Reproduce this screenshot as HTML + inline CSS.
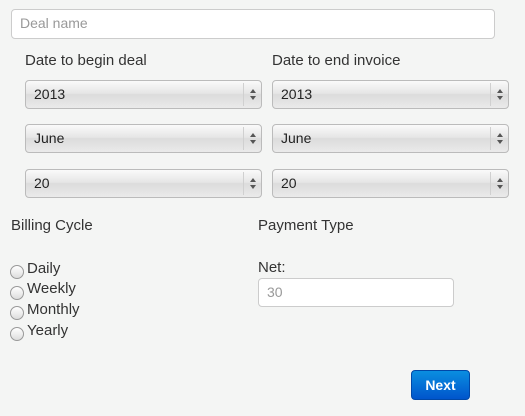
<!DOCTYPE html><html><head><style>
body{margin:0;width:525px;height:416px;background:#f4f5f4;font-family:"Liberation Sans",sans-serif;color:#333;position:relative;overflow:hidden}
.a{position:absolute}
.inp{position:absolute;background:#fff;border:1px solid #ccc;border-radius:4px;box-sizing:border-box;font-size:14px;color:#999;padding-left:8px;line-height:27px}
.sel{position:absolute;width:237px;height:29px;box-sizing:border-box;border:1px solid #bbb;border-radius:4px;background:linear-gradient(#fafafa,#e6e6e6 45%,#dcdcdc 50%,#eaeaea);font-size:14px;color:#222;padding-left:8px;line-height:27px}
.sel:after{content:"";position:absolute;right:17px;top:2px;bottom:2px;border-left:1px solid #d0d0d0}
.sel i{position:absolute;right:5px;top:8px;width:0;height:0;border-left:3px solid transparent;border-right:3px solid transparent;border-bottom:4px solid #555}
.sel b{position:absolute;right:5px;top:15px;width:0;height:0;border-left:3px solid transparent;border-right:3px solid transparent;border-top:4px solid #555}
.lbl{position:absolute;font-size:15px;color:#333}
.r{position:absolute;left:10px;width:12px;height:12px;border:1px solid #999;border-radius:50%;background:linear-gradient(#fff,#ddd)}
</style></head><body>
<div class="inp" style="left:11px;top:9px;width:484px;height:30px">Deal name</div>
<div class="lbl" style="left:25px;top:52px">Date to begin deal</div>
<div class="lbl" style="left:272px;top:52px">Date to end invoice</div>
<div class="sel" style="left:25px;top:80px">2013<i></i><b></b></div>
<div class="sel" style="left:25px;top:124px">June<i></i><b></b></div>
<div class="sel" style="left:25px;top:169px">20<i></i><b></b></div>
<div class="sel" style="left:272px;top:80px">2013<i></i><b></b></div>
<div class="sel" style="left:272px;top:124px">June<i></i><b></b></div>
<div class="sel" style="left:272px;top:169px">20<i></i><b></b></div>
<div class="lbl" style="left:11px;top:217px">Billing Cycle</div>
<div class="lbl" style="left:258px;top:217px">Payment Type</div>
<div class="r" style="top:265px"></div><div class="lbl" style="left:27px;top:260px">Daily</div>
<div class="r" style="top:286px"></div><div class="lbl" style="left:27px;top:280px">Weekly</div>
<div class="r" style="top:306px"></div><div class="lbl" style="left:27px;top:301px">Monthly</div>
<div class="r" style="top:327px"></div><div class="lbl" style="left:27px;top:322px">Yearly</div>
<div class="lbl" style="left:258px;top:259px">Net:</div>
<div class="inp" style="left:258px;top:278px;width:196px;height:29px">30</div>
<div class="a" style="left:411px;top:370px;width:59px;height:30px;box-sizing:border-box;border:1px solid #0048a8;border-radius:4px;background:linear-gradient(#0a8ee0,#0055cc);color:#fff;font-weight:bold;font-size:14px;text-align:center;line-height:28px">Next</div>
</body></html>
